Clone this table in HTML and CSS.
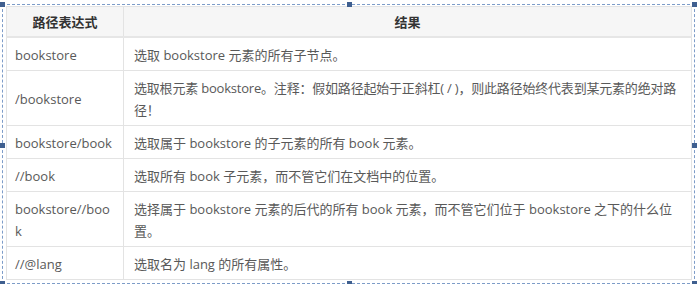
FILE: index.html
```html
<!DOCTYPE html>
<html lang="zh-CN">
<head>
<meta charset="utf-8">
<title>XPath 路径表达式</title>
<link rel="stylesheet" href="styles.css">
</head>
<body>
<div class="frame">
  <table class="xp">
    <colgroup><col class="c1"><col class="c2"></colgroup>
    <thead>
      <tr><th>路径表达式</th><th>结果</th></tr>
    </thead>
    <tbody>
      <tr><td>bookstore</td><td>选取 bookstore 元素的所有子节点。</td></tr>
      <tr><td>/bookstore</td><td class="tight">选取根元素 bookstore。注释：假如路径起始于正斜杠( / )，则此路径始终代表到某元素的绝对路径！</td></tr>
      <tr><td>bookstore/book</td><td>选取属于 bookstore 的子元素的所有 book 元素。</td></tr>
      <tr><td>//book</td><td>选取所有 book 子元素，而不管它们在文档中的位置。</td></tr>
      <tr><td>bookstore//book</td><td>选择属于 bookstore 元素的后代的所有 book 元素，而不管它们位于 bookstore 之下的什么位置。</td></tr>
      <tr><td>//@lang</td><td>选取名为 lang 的所有属性。</td></tr>
    </tbody>
  </table>
  <span class="h h-tl"></span><span class="h h-tm"></span><span class="h h-tr"></span>
  <span class="h h-ml"></span><span class="h h-mr"></span>
  <span class="h h-bl"></span><span class="h h-bm"></span><span class="h h-br"></span>
</div>
</body>
</html>
```
FILE: styles.css
```css
html, body { margin: 0; padding: 0; background: #fff; }
body {
  font-family: "Open Sans", "Noto Sans CJK SC", sans-serif;
  font-size: 13px;
  color: #595959;
}
.frame {
  position: relative;
  box-sizing: border-box;
  margin: 4px 0 0 2px;
  width: 693px;
  height: 280px;
  border: 1px dashed #7d9cc8;
  padding: 1px 2px 0 3px;
}
.xp {
  table-layout: fixed;
  border-collapse: collapse;
  width: 686px;
}
.xp .c1 { width: 117px; }
.xp th, .xp td {
  border: 1px solid #e3e3e3;
  line-height: 22px;
  text-align: left;
  vertical-align: middle;
  word-break: break-all;
}
.xp th {
  background: #f6f6f6;
  color: #333;
  font-weight: bold;
  text-align: center;
  padding: 4px 8px 3px;
  border-bottom: 2px solid #e6e6e6;
}
.xp td { padding: 6px 8px 4px 8px; }
.xp td + td { padding-left: 10px; padding-right: 10px; }
.xp td.tight { letter-spacing: -0.2px; }
.h {
  position: absolute;
  width: 5px;
  height: 5px;
  background: #3f5f8f;
}
.h-tl { left: -3px; top: -3px; }
.h-tm { left: 344px; top: -3px; }
.h-tr { right: -3px; top: -3px; }
.h-ml { left: -3px; top: 138px; }
.h-mr { right: -3px; top: 138px; }
.h-bl { left: -3px; bottom: -3px; }
.h-bm { left: 344px; bottom: -3px; }
.h-br { right: -3px; bottom: -3px; }
```
